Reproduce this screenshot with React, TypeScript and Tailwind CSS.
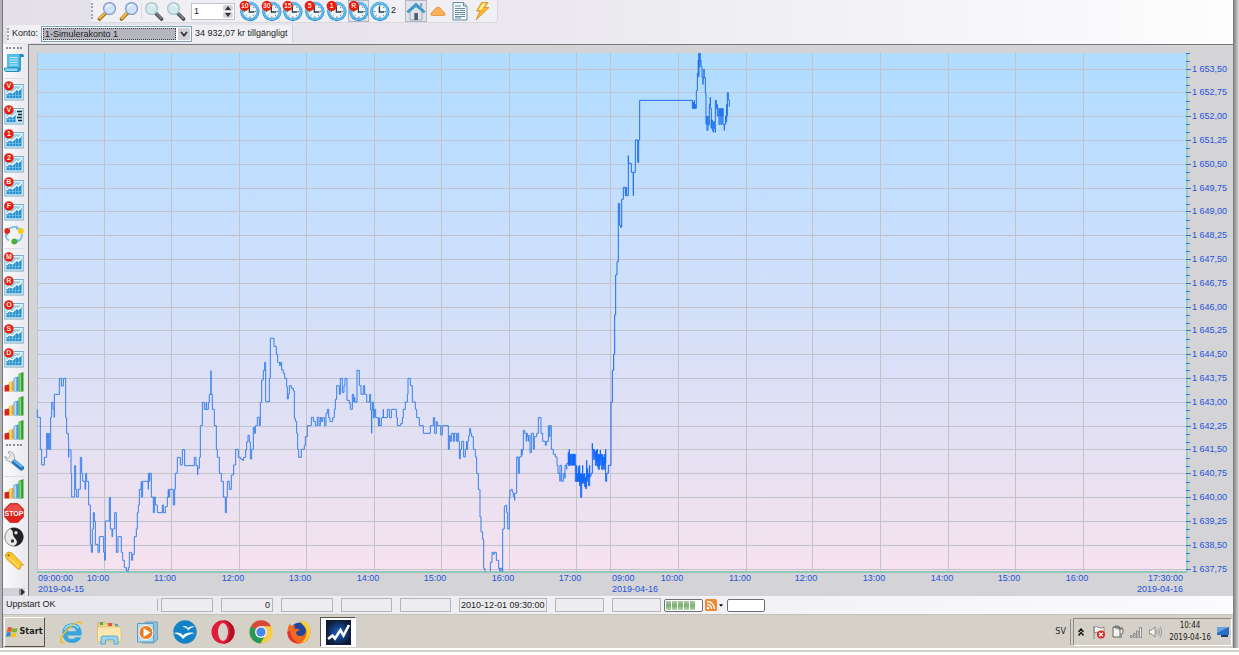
import React from "react";

type Kids = { children?: React.ReactNode };

/* ---------- chart data ---------- */

const morning =
  "M4 268 V292 H13 V388 H17 V435 H25 V412 H32 V340 H35 V388 H37 V340 H40 V388 H44 V292 H47 V247 H51 V268 H55 V292 V223 H70 V175 H76 V198 H82 V175 H89 V292 H92 V340 H97 V364 H98 V412 V390 H105 V460 H107 V531 H116 V437 H119 V508 H122 V531 H127 V508 H133 V412 H137 V460 H140 V484 H147 V508 H149 V460 H152 V484 H158 V555 H163 V673 H166 V697 H169 V627 H172 V578 H175 V603 H178 V673 H186 V697 H190 V650 H203 V697 H206 V721 H208 V603 H220 V532 H223 V627 H228 V650 H230 V627 H236 V578 H241 V697 H246 V650 H256 V697 H260 V721 H265 V743 H271 V753 H277 V743 H280 V697 H287 V721 H290 V703 H295 V650 H301 V627 H304 V578 H307 V555 H310 V508 H316 V484 V531 H320 V484 H337 V508 V460 H341 V484 V460 H346 V531 H352 V578 H355 V531 H358 V555 H364 V578 H379 V555 H382 V578 H388 V560 H394 V531 H397 V508 V531 H401 V508 H412 V555 H416 V508 H418 V460 H424 V412 H433 V435 H439 V389 H446 V437 H475 V412 H480 V437 H485 V465 V445 H490 V412 H493 V317 H499 V247 H505 V268 H511 V247 V268 H517 V247 H520 V223 H525 V152 V223 H529 V268 H535 V317 H541 V388 H544 V412 H550 V460 H556 V484 H562 V531 H568 V578 H571 V531 H574 V484 H580 V508 H586 V465 H593 V435 H599 V388 H607 V412 H613 V417 H620 V421 H623 V412 H629 V390 H632 V366 H636 V346 H640 V366 H643 V417 H647 V388 H652 V322 H656 V340 H658 V317 H664 V292 H670 V317 H673 V247 H677 V180 H682 V152 H686 V127 H689 V245 H700 V175 H703 V55 H714 V79 H721 V103 H725 V127 H731 V137 H734 V127 H737 V150 H742 V160 H746 V175 H752 V200 H754 V237 H757 V222 H760 V197 H766 V205 H772 V213 H775 V295 H778 V304 H782 V340 H785 V388 H788 V412 H796 V388 H805 V376 H808 V350 H814 V317 H826 V292 H832 V304 H838 V317 H844 V292 H849 V317 H853 V292";

const afternoon =
  "M0 233 H5 V245 H8 V233 H14 V257 H18 V220 H22 V208 H26 V233 H30 V245 H38 V233 H43 V208 H46 V178 H50 V137 H58 V163 H61 V115 H67 V157 H72 V137 H75 V115 H81 V181 H88 V190 H91 V208 H97 V163 H101 V186 H104 V172 V186 H111 V91 H118 V137 H123 V163 H130 V137 H134 V163 H140 V186 H149 V163 H152 V210 H155 V280 V210 H157 V186 H160 V233 H163 V208 H167 V233 H175 V257 H178 V233 V257 H184 V233 H190 V208 V233 H202 V208 H208 V233 H214 V208 H229 V233 H232 V257 H242 V251 H247 V233 H250 V208 H256 V186 H262 V163 H264 V115 H271 V137 H277 V186 H286 V208 H290 V233 H298 V257 H310 V280 H331 V257 H340 V233 H344 V280 H349 V245 H352 V257 H362 V285 H367 V257 H385 V328 H388 V287 H391 V304 H394 V280 H400 V304 H403 V280 H409 V304 H412 V280 H416 V304 H418 V356 H421 V328 H425 V304 H431 V351 H436 V328 H440 V304 V328 H443 V304 H446 V287 H449 V266 H452 V280 H455 V290 H460 V328 H466 V351 H470 V400 H475 V448 H480 V531 H483 V576 H488 V598 H491 V685 H495 V694 M511 694 V667 H516 V637 H520 V643 H523 V637 H529 V661 H536 V685 H540 V694 V685 H546 V694 H548 V567 H553 V499 H556 V496 H560 V518 H563 V567 H568 V472 H570 V451 H574 V448 H577 V457 H580 V470 H584 V481 V460 H590 V351 H595 V400 H598 V351 H604 V328 H606 V346 V330 H610 V271 H614 V280 H619 V304 V280 H622 V290 H625 V304 V287 H630 V338 H634 V280 H640 V328 H643 V290 H650 V280 H655 V233 H663 V280 H668 V304 H676 V316 H679 V304 H685 V257 H688 V290 H690 V257 H694 V328 H700 V343 H706 V351 H711 V376 H714 V400 H720 V424 V376 H725 V424 H730 V400 H735 V415 V376 H740 V388 V370 H745 V343";

const closing =
  "M745 343 V338 V376 H748 V328 V376 H751 V343 V370 H754 V376 V343 H757 V376 V343 H760 V376 V343 H763 V376 V343 H766 V424 H770 V376 V424 H773 V400 V424 H776 V380 V424 H779 V376 V438 H782 V400 V472 H785 V400 V430 H788 V376 V424 H791 V402 V430 H794 V400 V440 H797 V412 V446 H800 V361 V424 H803 V385 V412 H806 V400 V437 H809 V376 V409 H813 V400 H817 V310 V328 H822 V360 V328 V351 H826 V335 V376 H829 V330 V365 H832 V328 V380 H835 V343 V388 H838 V343 V376 H841 V330 V360 H845 V343 V388 H848 V343 V376 H851 V351 V388 H854 V343 V370 H857 V328 V424 H860 V400 H865 V376 H873 V186 H877 V91 H881 V43 H884 V0";

const nextDay =
  "M224 885 V810 H227 V690 H231 V650 H235 V475 H239 V541 H242 V547 H245 V463 H250 V427 H256 V452 H258 V427 H260 V452 H265 V332 V355 H274 V382 H280 V452 V382 H286 V285 H293 V352 H296 V285 H299 V166 H457 V190 H460 V172 V190 H463 V166 V190 H466 V178 V190 H469 V137 H472 V85 H475 V45 V95 H477 V24 V65 H480 V24 V45 H483 V65 H486 V72 V97 H489 V118 V100 H492 V72 V97 H496 V145 H498 V237 H501 V213 V256 H504 V213 V240 H508 V178 H511 V157 V190 H514 V250 V225 H517 V240 V256 H520 V262 V230 H523 V250 H526 V262 V166 H529 V190 H532 V178 V213 H537 V190 V238 H540 V190 V213 H543 V190 V238 H546 V190 V213 H549 V190 V238 H553 V256 V238 H557 V213 V230 H560 V178 V213 H562 V143 H565 V165 H568 V185";

const hours: [number, string][] = [
  [104, "10:00"], [171, "11:00"], [239, "12:00"], [306, "13:00"], [374, "14:00"],
  [441, "15:00"], [509, "16:00"], [576, "17:00"], [678, "10:00"], [746, "11:00"],
  [812, "12:00"], [880, "13:00"], [948, "14:00"], [1015, "15:00"], [1083, "16:00"],
];

const STEP = 500 / 63;

const levels = Array.from({ length: 22 }, (_, i) => {
  const cents = 165350 - i * 75;
  const whole = Math.floor(cents / 100);
  return {
    y: Math.floor(69 + i * STEP * 3),
    text: `${Math.floor(whole / 1000)} ${whole % 1000},${String(cents % 100).padStart(2, "0")}`,
  };
});

const ticks = Array.from({ length: 66 }, (_, i) => i)
  .filter((i) => i % 3 !== 2)
  .map((i) => Math.round(53 + i * STEP));

function PriceChart() {
  return (
    <svg viewBox="29 45 1204 551" className="block h-auto w-full bg-[#d4d4d6]" role="img" aria-label="1 653,50">
      <defs>
        <linearGradient id="sky" x1="0" y1="0" x2="0" y2="1">
          <stop offset="0" stopColor="#afdcff" />
          <stop offset="0.25" stopColor="#c2deff" />
          <stop offset="0.5" stopColor="#d3e0f9" />
          <stop offset="0.75" stopColor="#e4e0f3" />
          <stop offset="1" stopColor="#f6e2ee" />
        </linearGradient>
      </defs>
      <rect x="37" y="53" width="1149" height="519" fill="url(#sky)" />
      <g stroke="#c2c3c9" shapeRendering="crispEdges">
        <path d="M37.5 53V572M610.5 53V572" />
        {hours.map(([x]) => (
          <path key={x} d={`M${x}.5 53V572`} />
        ))}
        {levels.map((l) => (
          <path key={l.y} d={`M37 ${l.y}.5H1186`} />
        ))}
      </g>
      <path d="M37 572H1188" stroke="#8fc7b8" strokeWidth="2" />
      <path d="M1187 53V573" stroke="#9dcfc0" strokeWidth="2" />
      <g stroke="#2a78dd" shapeRendering="crispEdges">
        {ticks.map((y) => (
          <path key={y} d={`M1186 ${y}.5H1190`} />
        ))}
        {levels.map((l) => (
          <path key={l.y} d={`M1186 ${l.y}.5H1191`} />
        ))}
      </g>
      <g fill="none" stroke="#3680ee" strokeWidth="3">
        <g transform="translate(36 320) scale(0.33333)">
          <path d={morning} />
        </g>
        <g transform="translate(320 340) scale(0.33333)">
          <path d={afternoon} />
          <path d={closing} stroke="#0f66fa" />
        </g>
        <g transform="translate(540 45) scale(0.33333)">
          <path d={nextDay} stroke="#1b6ff0" />
        </g>
      </g>
      <g fill="#2453de" className="font-['Liberation_Sans',sans-serif] text-[9px]">
        {levels.map((l) => (
          <text key={l.y} x="1192" y={l.y + 3}>{l.text}</text>
        ))}
        {hours.map(([x, t]) => (
          <text key={x} x={x - 6} y="581" textAnchor="middle">{t}</text>
        ))}
        <text x="38" y="581">09:00:00</text>
        <text x="38" y="592">2019-04-15</text>
        <text x="612" y="581">09:00</text>
        <text x="612" y="592">2019-04-16</text>
        <text x="1183" y="581" textAnchor="end">17:30:00</text>
        <text x="1183" y="592" textAnchor="end">2019-04-16</text>
      </g>
    </svg>
  );
}

/* ---------- icons ---------- */

function Magnifier({ flip }: { flip?: boolean }) {
  return (
    <svg viewBox="0 0 20 20" className="size-5">
      <g transform={flip ? "translate(20 0) scale(-1 1)" : undefined}>
        <path d="M9 11.500L2.500 18" stroke={flip ? "#3c4247" : "#a06a1c"} strokeWidth="3.600" strokeLinecap="round" />
        <path d="M8.500 11.500L2.800 17.300" stroke={flip ? "#777f85" : "#f4bd4a"} strokeWidth="2" strokeLinecap="round" />
        <circle cx="12.500" cy="7.500" r="5.900" fill={flip ? "#cfe9ec" : "#cfe4fb"} stroke={flip ? "#a9c6ca" : "#8299cc"} strokeWidth="1.300" />
        <path d="M9 7a4 4 0 0 1 6-3c-2 0-4 1-6 3z" fill="#fff" />
      </g>
    </svg>
  );
}

function Clock({ badge }: { badge?: string }) {
  return (
    <svg viewBox="0 0 22 22" className="size-[22px]">
      <circle cx="11" cy="11.500" r="9.800" fill="#2488cc" />
      <circle cx="11" cy="11" r="9.300" fill="#62bdee" />
      <circle cx="11" cy="11.500" r="7.200" fill="#eef5f8" stroke="#3b8fc0" strokeWidth=".6" />
      <path d="M11 5v1.500M11 16.500V18M4.800 11.500h1.400M16 11.500h1.400M15.300 7l-.9.900M6.700 16l.9-.9M15.300 16l-.9-.9" stroke="#456" strokeWidth=".9" />
      <path d="M10.500 6.500V12H15.500" fill="none" stroke="#2d3a44" strokeWidth="1.300" />
      {badge && (
        <>
          <circle cx="5.800" cy="5.800" r="5.200" fill="#e8200f" />
          <text x="5.800" y="8.200" textAnchor="middle" fill="#ffd5cc" className="font-['Liberation_Sans',sans-serif] text-[7px] font-bold">{badge}</text>
        </>
      )}
    </svg>
  );
}

function MiniChart({ badge, list }: { badge: string; list?: boolean }) {
  return (
    <svg viewBox="0 0 20 20" className="size-5">
      <rect x=".8" y="3.500" width="18.400" height="15.500" fill="#e6f4fa" stroke="#7ba9bf" />
      <rect x="2.500" y="5.200" width="15" height="12" fill="#8fcfec" />
      <path d="M2.500 13l3-2 3 1.500 4-4 2 1.500 3-3.500v10.700h-15z" fill="#2a93cf" />
      <path d="M5.500 5.200v12M8.500 5.200v12M11.500 5.200v12M14.500 5.200v12M2.500 8.500h15M2.500 14.500h15" stroke="#bfe6f5" strokeWidth=".35" />
      <path d="M2.500 13l3-2.500 3 1.500 4-4 2 1.500 3-3.500" fill="none" stroke="#fff" strokeWidth="1.200" />
      {list && (
        <>
          <rect x="12" y="5" width="6.500" height="12.500" fill="#c9e6f2" />
          <path d="M13 6.500h5M14 9.500h4M13 12.500h5M14 15.500h4" stroke="#14242e" strokeWidth="1.400" />
        </>
      )}
      <circle cx="4.900" cy="4.900" r="4.700" fill="#e81e10" />
      <text x="4.900" y="7.400" textAnchor="middle" fill="#ffe4de" className="font-['Liberation_Sans',sans-serif] text-[7px] font-bold">{badge}</text>
    </svg>
  );
}

function Bars() {
  return (
    <svg viewBox="0 0 20 20" className="size-5">
      <path d="M.5 13.500l4.500-1v7H.5z" fill="#d92219" />
      <path d="M5 10l4.500-1v10.500H5z" fill="#f0a41c" />
      <path d="M5.800 10h1.700v9H5.800z" fill="#ffe27a" />
      <path d="M9.500 6L14.500 4.500v15h-5z" fill="#4a9ddb" />
      <path d="M10.300 6.200h2v13h-2z" fill="#b5dcf7" />
      <path d="M14.500 2l5-2v19.500h-5z" fill="#2f9c34" />
      <path d="M15.300 2h1.900v17h-1.900z" fill="#86d676" />
    </svg>
  );
}

function Scroll() {
  return (
    <svg viewBox="0 0 20 20" className="size-5">
      <path d="M3 1h15q2 0 1.500 3H17v12q0 3-3 3H2q-2-1-1.500-4H3z" fill="#2b9bd3" />
      <path d="M3 1h12.500v13.500H3z" fill="#55bdea" />
      <path d="M5.500 4.500h8M5.500 7h8M5.500 9.500h8M5.500 12h8" stroke="#c9eefb" strokeWidth="1.100" />
      <path d="M.5 15H14v3.500H2Q.5 18 .5 15z" fill="#8fdaf5" stroke="#1b7fb5" strokeWidth=".8" />
      <path d="M15.500 1H18q2 0 1.500 3H17" fill="#1d86bd" />
    </svg>
  );
}

function Cycle() {
  return (
    <svg viewBox="0 0 20 20" className="size-5">
      <path d="M5 3.500Q10 .5 14 3M18 9Q18.500 13 15 15.500M5 15.500Q1 13 2 9" fill="none" stroke="#79bfe6" strokeWidth="1.700" />
      <path d="M12 .5l4 3-4 1.500zM13 14l-.5 4 4-2zM.5 11l1.800-4 2.500 3.500z" fill="#79bfe6" />
      <circle cx="3.200" cy="6" r="2.900" fill="#dd2a1e" />
      <circle cx="16.800" cy="6" r="2.900" fill="#f5c918" />
      <circle cx="10.300" cy="16.500" r="2.900" fill="#4fae35" />
    </svg>
  );
}

function Wrench() {
  return (
    <svg viewBox="0 0 20 20" className="size-5">
      <path d="M9.500 10.500l8 6.500" stroke="#2478c0" strokeWidth="5" strokeLinecap="round" />
      <path d="M10.500 10l7 5.500" stroke="#6fbaf0" strokeWidth="1.700" strokeLinecap="round" />
      <path d="M4 .8Q9 0 10 4l.5 4-3 3Q1 10.500.8 5l3 2.500 2.800-2.700z" fill="#e6eaee" stroke="#98a2aa" strokeWidth=".9" />
    </svg>
  );
}

function Stop() {
  return (
    <svg viewBox="0 0 20 20" className="size-5">
      <path d="M6 .6h8L19.400 6v8L14 19.400H6L.6 14V6z" fill="#e02420" stroke="#b41512" strokeWidth=".7" />
      <path d="M6.300 1.500h7.400L18 6v2H2V6z" fill="#f0605a" opacity=".7" />
      <text x="10" y="12.500" textAnchor="middle" fill="#fff" className="font-['Liberation_Sans',sans-serif] text-[7px] font-bold">STOP</text>
    </svg>
  );
}

function YinYang() {
  return (
    <svg viewBox="0 0 20 20" className="size-5">
      <circle cx="10" cy="10" r="9.200" fill="#e9e9e9" stroke="#888" />
      <path d="M6 1.800A9.200 9.200 0 1 1 10 19.200Q15 16 11.500 12T9 5.500Q8.500 3 6 1.800z" fill="#222" />
      <circle cx="12" cy="5.800" r="1.700" fill="#ddd" />
      <circle cx="8.500" cy="14" r="1.700" fill="#333" />
    </svg>
  );
}

function Tag() {
  return (
    <svg viewBox="0 0 20 20" className="size-5">
      <path d="M1 4L4 1l4 1 11.500 12-3 .5.500 2.500-2.500.5L15 19 3 8.500z" fill="#fbc62c" stroke="#d79a1c" strokeWidth=".9" />
      <path d="M5 6.500l9.500 9" stroke="#fff0a4" strokeWidth="1" />
      <circle cx="4.500" cy="4.300" r="1.100" fill="#8c5d0b" />
    </svg>
  );
}

function House() {
  return (
    <svg viewBox="0 0 20 20" className="size-5">
      <path d="M4 9.500l6-5 6 5v9.500H4z" fill="#dbe4ec" stroke="#8095a5" strokeWidth=".7" />
      <path d="M14 2h2.200v5L14 5z" fill="#8fa5b4" />
      <path d="M.8 10.500L10 2l9.200 8.500-1.700 1.200L10 5.500l-7.500 6.200z" fill="#3d9bd6" stroke="#2576aa" strokeWidth=".6" />
      <path d="M8.300 12h3.600v7H8.300z" fill="#555c63" />
    </svg>
  );
}

function Doc() {
  return (
    <svg viewBox="0 0 20 20" className="size-5">
      <path d="M3 1.500h10.500L17 5v14H3z" fill="#f3f8fb" stroke="#6b8ba0" />
      <path d="M13.500 1.500V5H17" fill="#c5dbe8" stroke="#6b8ba0" />
      <path d="M5 5h6M5 7.500h10M5 9.500h4M10 9.500h5M5 11.500h10M5 13.500h4M10 13.500h5M5 15.500h10M5 17h6" stroke="#5a7f98" strokeWidth=".9" />
    </svg>
  );
}

function Bolt() {
  return (
    <svg viewBox="0 0 20 20" className="size-5">
      <path d="M9.500 1.500h6.500l-3.500 5H17L4 19l4-9H4.500z" fill="#fbb728" stroke="#c98515" strokeWidth=".7" />
      <path d="M10.500 2.500h3.500L9 9H6.500z" fill="#fff0a0" />
    </svg>
  );
}

function Caret() {
  return (
    <svg viewBox="0 0 20 20" className="size-5">
      <path d="M10 6q1 0 2 1l4.700 5q1.300 2.500-1 2.500H4.300q-2.300 0-1-2.500L8 7q1-1 2-1z" fill="#f9b25c" stroke="#e48a35" strokeWidth=".8" />
    </svg>
  );
}

function Explorer() {
  return (
    <svg viewBox="0 0 26 26" className="size-[26px]">
      <path d="M23.800 16.500H9.500q.5 3.500 4.500 3.500 2.500 0 3.800-1.800h5.400Q21 24 14 24 4.500 23.500 4.300 14 4.800 4.500 14 4.300q10 .2 9.800 12.200zM9.600 12.300h8.600Q17.500 8.500 14 8.500t-4.400 3.800z" fill="#35a6df" fillRule="evenodd" />
      <path d="M6.500 11q2-5 7.500-5 4.500 0 6.500 3.500" fill="none" stroke="#a3e0f8" strokeWidth="1.400" />
      <path d="M2.600 23.800Q-.5 20 7.500 11.500 17.500 1.500 22.800 2.200q2.600.6.600 5.200.8-3.200-1.200-3.600Q17.500 3.300 9 12 2 20 4.200 22.600q2 1.600 6-.6-5 3.600-7.600 1.800z" fill="#f0bd27" />
    </svg>
  );
}

function Folder() {
  return (
    <svg viewBox="0 0 26 26" className="size-[26px]">
      <path d="M2 4l7-1 2 2h10v3h3v13H2z" fill="#efd588" stroke="#caa548" strokeWidth=".7" />
      <path d="M4 3h3v3H4z" fill="#5aa945" /><path d="M12 4h4v3h-4z" fill="#d85c45" /><path d="M19 5h3v2h-3z" fill="#4e9fd2" />
      <path d="M1.500 8H25v14.500H1.500z" fill="#f9e9ae" stroke="#d5b762" strokeWidth=".6" />
      <path d="M5 25v-6q0-2 2-2h13q2 0 2 2v6h-4v-4H9.500v4z" fill="#9ad4ee" stroke="#4a9cc6" strokeWidth=".8" />
    </svg>
  );
}

function MediaPlayer() {
  return (
    <svg viewBox="0 0 26 26" className="size-[26px]">
      <path d="M11 3h12.500v18l-4 3H8z" fill="#8dbedb" stroke="#5a93b5" strokeWidth=".7" />
      <path d="M3.500 4.500h16v18.500h-16z" fill="#b5dcf0" stroke="#5e9dc2" />
      <circle cx="12" cy="13.500" r="7" fill="#ee7a22" stroke="#fff" strokeWidth="1" />
      <path d="M9.500 9l7 4.500-7 4.500z" fill="#fff" />
    </svg>
  );
}

function Seabirds() {
  return (
    <svg viewBox="0 0 26 26" className="size-[26px]">
      <circle cx="13" cy="13" r="11.700" fill="#1482c6" />
      <path d="M10 7.500q4-1.500 6 1.500 2-2.500 7-1.500-5 1-6.500 4-2.500-3.500-6.500-4z" fill="#fff" />
      <path d="M1.500 14q7-1.500 9.500 2.500 3.500-4 12-2.500-8.500 1.500-12 6Q8 15.500 1.500 14z" fill="#fff" />
    </svg>
  );
}

function Opera() {
  return (
    <svg viewBox="0 0 26 26" className="size-[26px]">
      <ellipse cx="13" cy="13" rx="11.500" ry="11.700" fill="#e01c36" />
      <path d="M13 1.300a11.500 11.700 0 0 1 0 23.400q7-2 7-11.700T13 1.300z" fill="#b00f26" />
      <ellipse cx="13" cy="13" rx="5" ry="9" fill="#d5d1c9" />
    </svg>
  );
}

function Chrome() {
  return (
    <svg viewBox="0 0 26 26" className="size-[26px]">
      <circle cx="13" cy="13" r="11.600" fill="#f7cc46" />
      <path d="M13 13L2.900 7.200A11.600 11.600 0 0 1 23.100 7.200H13z" fill="#d9483b" />
      <path d="M3 7.200A11.600 11.600 0 0 0 12.500 24.600l5.500-9.500-5-2z" fill="#279a55" />
      <circle cx="13" cy="13" r="6" fill="#f2f2f0" />
      <circle cx="13" cy="13" r="4.600" fill="#4a87ea" />
    </svg>
  );
}

function Firefox() {
  return (
    <svg viewBox="0 0 26 26" className="size-[26px]">
      <circle cx="13.500" cy="13" r="9.500" fill="#22489c" />
      <path d="M15 1.500q9 2 9.500 10.500Q24 24 13 24.700 1.500 24 1.300 13 1.300 8 4 4.500l1 2.500 4-1-1 3.500q4-.5 6 1.500l-4 2q0 4 4.500 4 5 0 5.500-6 0-5-5-9.500z" fill="#f26a1e" />
      <path d="M15.500 1.500q9 2 9 11Q24 22 15 24.300 22 18 20.500 11 19 7 15.500 4.500z" fill="#fbd033" />
      <path d="M1.300 13Q2 24 13 24.700q-8-4-9-13z" fill="#dc2f37" />
    </svg>
  );
}

function TradeApp() {
  return (
    <svg viewBox="0 0 26 26" className="size-[26px]">
      <defs>
        <radialGradient id="glow"><stop offset="0" stopColor="#1d62d4" /><stop offset="1" stopColor="#0e1d36" /></radialGradient>
      </defs>
      <rect x="1" y="1" width="25" height="25" fill="url(#glow)" />
      <path d="M3 20l4.500-3.500 2.500 3 5.500-8.500 3 5.500L24 6" fill="none" stroke="#fff" strokeWidth="2.600" />
    </svg>
  );
}

function WindowsFlag() {
  return (
    <svg viewBox="0 0 14 14" className="size-3">
      <path d="M2 2q2.500-1.500 5 0L6 7Q4 6 1 7z" fill="#e8552b" />
      <path d="M7.500 2.200q3 1.300 6 0L12.500 7q-3 1-6 0z" fill="#77b829" />
      <path d="M.8 7.700q2.700-1.200 5 0l-1 5Q2.500 11.500 0 12.700z" fill="#2f86d6" />
      <path d="M6.300 7.900q3 1.300 6 0l-1 4.700q-3 1.300-6 0z" fill="#f8c01d" />
    </svg>
  );
}

/* ---------- small building blocks ---------- */

function ToolButton({ label, pressed, wide, children }: Kids & { label: string; pressed?: boolean; wide?: boolean }) {
  return (
    <button
      type="button"
      aria-label={label}
      className={
        "flex h-[22px] items-center justify-center " +
        (wide ? "min-w-0 flex-1 " : "w-[22px] shrink-0 ") +
        (pressed ? "bg-[#dfe3ea] outline outline-1 -outline-offset-1 outline-[#b4b8c2]" : "")
      }
    >
      {children}
    </button>
  );
}

function SideButton({ label, children }: Kids & { label: string }) {
  return (
    <button type="button" aria-label={label} className="flex h-6 items-center justify-center">
      {children}
    </button>
  );
}

function Cell({ className, children }: Kids & { className: string }) {
  return <div className={"h-[14px] shrink-0 border border-[#b3b3b9] bg-[#ececf1] leading-3 " + className}>{children}</div>;
}

const SideLine = () => <div className="h-px w-5 bg-[#dcdce2]" />;
const SideGrip = () => <div className="w-4 border-t-2 border-dotted border-[#8d8d96]" />;

const clocks = ["10", "30", "15", "5", "1", "R"];
const topCharts = ["V", "V", "1", "2", "B", "F"];
const lowCharts = ["M", "R", "O", "S", "D"];

export default function App() {
  return (
    <div className="flex w-full flex-col bg-white font-['Liberation_Sans',sans-serif] text-[9px] text-[#1d1d22]">
      <div className="flex">
        <div className="w-[3px] shrink-0 border-r border-[#77777b] bg-[#b3b3b6]" />
        <div className="flex min-w-0 flex-1 flex-col">
          <header className="bg-linear-to-r from-[#e3e0e7] via-[#ebe9ef] via-45% to-[#fdfdfe]">
            <div className="flex h-6 items-start pl-[88px]">
              <div className="flex h-[23px] items-center rounded-r-sm border-r border-b border-[#d9d9df] bg-[#f0eff4] pr-1">
                <div className="mr-[3px] h-4 border-l-2 border-dotted border-[#a3a3aa]" />
                <ToolButton label="Zoom +"><Magnifier /></ToolButton>
                <ToolButton label="Zoom -"><Magnifier /></ToolButton>
                <div className="mx-px h-4 w-px bg-[#dcdce2]" />
                <ToolButton label="X +"><Magnifier flip /></ToolButton>
                <ToolButton label="X -"><Magnifier flip /></ToolButton>
                <div className="mx-1 flex h-[17px] w-11 border border-[#c2c2ca] bg-white">
                  <input aria-label="1" defaultValue="1" className="w-0 min-w-0 flex-1 bg-transparent pl-0.5 text-[9px] leading-none outline-none" />
                  <div className="flex w-3 flex-col gap-px p-px">
                    <button type="button" aria-label="+" className="flex flex-1 items-center justify-center rounded-xs bg-[#d3d3d9]">
                      <svg viewBox="0 0 6 4" className="h-1 w-1.5"><path d="M0 4l3-4 3 4z" fill="#333" /></svg>
                    </button>
                    <button type="button" aria-label="-" className="flex flex-1 items-center justify-center rounded-xs bg-[#d3d3d9]">
                      <svg viewBox="0 0 6 4" className="h-1 w-1.5"><path d="M0 0l3 4 3-4z" fill="#333" /></svg>
                    </button>
                  </div>
                </div>
                <div className="flex w-[152px]">
                  {clocks.map((c) => (
                    <ToolButton key={c} label={c} wide pressed={c === "R"}><Clock badge={c} /></ToolButton>
                  ))}
                  <ToolButton label="2" wide><Clock /></ToolButton>
                </div>
                <span className="w-[14px]">2</span>
                <ToolButton label="Start" pressed><House /></ToolButton>
                <ToolButton label="Upp"><Caret /></ToolButton>
                <ToolButton label="Logg"><Doc /></ToolButton>
                <ToolButton label="Order"><Bolt /></ToolButton>
              </div>
            </div>
            <div className="flex h-5 items-center pl-1">
              <div className="flex h-[18px] items-center border-r border-[#cfcfd6] bg-[#f0eff4] pr-1">
                <div className="mr-[3px] h-3 border-l-2 border-dotted border-[#a3a3aa]" />
                <label htmlFor="account" className="w-[29px]">Konto:</label>
                <div className="mr-[3px] flex h-4 w-[151px] border border-[#7ba0b8] bg-white p-px">
                  <select id="account" className="min-w-0 flex-1 appearance-none bg-[#b5b5bd] pl-0.5 text-[9px] leading-3 outline outline-1 -outline-offset-1 outline-dotted outline-[#45454c]">
                    <option>1-Simulerakonto 1</option>
                  </select>
                  <span className="ml-0.5 flex w-3 items-center justify-center bg-[#d0d2d8]">
                    <svg viewBox="0 0 8 6" className="h-1.5 w-2"><path d="M1 1l3 3.500L7 1" fill="none" stroke="#333" strokeWidth="1.800" /></svg>
                  </span>
                </div>
                <span>34 932,07 kr tillgängligt</span>
              </div>
            </div>
          </header>

          <div className="flex">
            <nav className="flex w-[25px] shrink-0 flex-col items-center bg-linear-to-r from-[#fafafc] to-[#e9e9ee] pt-[3px] pr-[3px]">
              <SideGrip />
              <div className="pt-0.5 pb-[3px]"><SideButton label="Rulla"><Scroll /></SideButton></div>
              <SideLine />
              {topCharts.map((c, i) => (
                <SideButton key={i} label={c}><MiniChart badge={c} list={i === 1} /></SideButton>
              ))}
              <SideButton label="Cykel"><Cycle /></SideButton>
              <div className="py-px"><SideLine /></div>
              {lowCharts.map((c) => (
                <SideButton key={c} label={c}><MiniChart badge={c} /></SideButton>
              ))}
              <SideButton label="Stapel 1"><Bars /></SideButton>
              <SideButton label="Stapel 2"><Bars /></SideButton>
              <SideButton label="Stapel 3"><Bars /></SideButton>
              <div className="pt-0.5 pb-[3px]"><SideGrip /></div>
              <SideButton label="Verktyg"><Wrench /></SideButton>
              <div className="pt-[3px]"><SideLine /></div>
              <SideButton label="Stapel 4"><Bars /></SideButton>
              <SideButton label="Stopp"><Stop /></SideButton>
              <SideButton label="Balans"><YinYang /></SideButton>
              <SideButton label="Etikett"><Tag /></SideButton>
              <div className="mt-auto flex h-2 w-full items-center justify-end bg-[#d2d2d8]">
                <svg viewBox="0 0 6 6" className="size-1.5"><path d="M1 0v6M2.500 0l3 3-3 3z" fill="#222" stroke="#222" strokeWidth=".7" /></svg>
              </div>
            </nav>
            <main className="min-w-0 flex-1 border-t border-l border-[#77777b]">
              <PriceChart />
            </main>
          </div>

          <footer className="flex h-[19px] items-center border-b border-[#c5c1b8] bg-linear-to-r from-[#e8e8ee] via-[#f0f0f5] via-50% to-[#fbfbfd] pl-[3px]">
            <span className="w-[151px] shrink-0">Uppstart OK</span>
            <div className="mr-[3px] h-3 w-px bg-[#b3b3b9]" />
            <div className="flex gap-2">
              <Cell className="w-[52px]" />
              <Cell className="w-[52px] pr-0.5 text-right">0</Cell>
              <Cell className="w-[52px]" />
              <Cell className="w-[51px]" />
              <Cell className="w-[51px]" />
              <Cell className="w-[88px] pl-px">2010-12-01 09:30:00</Cell>
              <Cell className="w-[49px]" />
              <Cell className="w-[49px]" />
            </div>
            <div className="ml-[3px] flex h-[13px] w-[39px] shrink-0 gap-px rounded-xs border border-[#6e6e75] bg-white p-px">
              {[0, 1, 2, 3, 4].map((n) => (
                <span key={n} className="w-[5px] bg-linear-to-b from-[#a9cba0] via-[#7eae75] to-[#b5d4ad]" />
              ))}
            </div>
            <button type="button" aria-label="RSS" className="ml-0.5 flex items-center gap-0.5">
              <svg viewBox="0 0 12 12" className="size-3">
                <rect width="12" height="12" rx="1.500" fill="#ec8a35" />
                <circle cx="3" cy="9" r="1.300" fill="#fff" />
                <path d="M2 5.500A4.500 4.500 0 0 1 6.500 10M2 2.500A7.500 7.500 0 0 1 9.500 10" fill="none" stroke="#fff" strokeWidth="1.300" />
              </svg>
              <svg viewBox="0 0 6 4" className="h-[3px] w-1"><path d="M0 0h6L3 4z" fill="#000" /></svg>
            </button>
            <div className="ml-1 h-[13px] w-[38px] shrink-0 rounded-xs border border-[#6e6e75] bg-white" />
          </footer>

          <div className="flex h-[33px] items-center bg-[#d5d1c9]">
            <button type="button" className="ml-px flex h-[30px] w-[41px] items-center justify-center gap-px border border-t-white border-r-[#55534e] border-b-[#55534e] border-l-white font-['DejaVu_Sans_Condensed','DejaVu_Sans',sans-serif] text-[9px] font-bold">
              <WindowsFlag />
              Start
            </button>
            <div className="ml-[13px] flex gap-3">
              {[
                ["Explorer", <Explorer />],
                ["Mappar", <Folder />],
                ["Media", <MediaPlayer />],
                ["Office", <Seabirds />],
                ["Opera", <Opera />],
                ["Chrome", <Chrome />],
                ["Firefox", <Firefox />],
              ].map(([name, icon]) => (
                <button key={name as string} type="button" aria-label={name as string}>{icon}</button>
              ))}
            </div>
            <button type="button" aria-label="Trader" className="ml-2 flex h-[30px] w-9 items-center justify-center border border-t-[#55534e] border-r-white border-b-white border-l-[#55534e] bg-white">
              <TradeApp />
            </button>
            <div className="ml-auto flex items-center font-['DejaVu_Sans_Condensed','DejaVu_Sans',sans-serif] text-[8px]">
              <span className="mr-1 text-[9px]">SV</span>
              <div className="mr-0.5 h-[26px] w-px bg-[#918e86]" />
              <div className="mr-px flex h-7 w-[159px] items-center border border-t-[#8e8b84] border-r-white border-b-white border-l-[#8e8b84] pr-0.5 pl-1">
                <svg viewBox="0 0 6 8" className="mr-2 h-2 w-1.5"><path d="M.5 4L3 1l2.500 3M.5 7.500L3 4.500l2.500 3" fill="none" stroke="#111" strokeWidth="1.400" /></svg>
                <div className="flex items-center gap-1.5">
                  <svg viewBox="0 0 14 14" className="size-[14px]">
                    <path d="M2 1v13M2 2q3-1 5 .500t5-.500v6q-3 1.500-5 0T2 8z" fill="#f5f5f2" stroke="#888" />
                    <circle cx="9" cy="9.500" r="4" fill="#d92c27" /><path d="M7.200 7.700l3.600 3.600M10.800 7.700l-3.600 3.600" stroke="#fff" strokeWidth="1.300" />
                  </svg>
                  <svg viewBox="0 0 12 14" className="h-[14px] w-3"><path d="M1 2h7v10H1zM3 1h3v2H3zM6 4h5v3q0 2-2 2v4M7 4V2M10 4V2" fill="#f3f3ef" stroke="#666" /></svg>
                  <svg viewBox="0 0 13 12" className="h-3 w-[13px]"><path d="M.5 9.500h1.500v2H.5zM3.500 7.500H5v4H3.500zM6.500 5H8v6.500H6.500zM9.500 1.500h2v10h-2z" fill="#eee" stroke="#777" strokeWidth=".8" /></svg>
                  <svg viewBox="0 0 13 14" className="h-[14px] w-[13px]"><path d="M.5 5h2L6 2v10L2.500 9h-2z" fill="#f5f5f2" stroke="#777" strokeWidth=".8" /><path d="M7.500 5q1.500 2 0 4M9.300 3.500q2.500 3.500 0 7M11 2q3.500 5 0 10" fill="none" stroke="#888" strokeWidth=".8" /></svg>
                </div>
                <div className="ml-auto text-center leading-3">
                  <div>10:44</div>
                  <div>2019-04-16</div>
                </div>
                <svg viewBox="0 0 12 12" className="ml-1.5 size-3"><rect y="1" width="12" height="8" fill="#2c6fc0" /><path d="M0 1h12L0 7z" fill="#66a5e2" /><path d="M4 9h7v2H4z" fill="#1d3f6d" /></svg>
              </div>
            </div>
          </div>
        </div>
        <div className="w-1.5 shrink-0 bg-linear-to-r from-[#77777b] to-[#dededf]" />
      </div>
      <div className="h-0.5 bg-white" />
      <div className="h-0.5 bg-[#d5d1c9]" />
    </div>
  );
}
